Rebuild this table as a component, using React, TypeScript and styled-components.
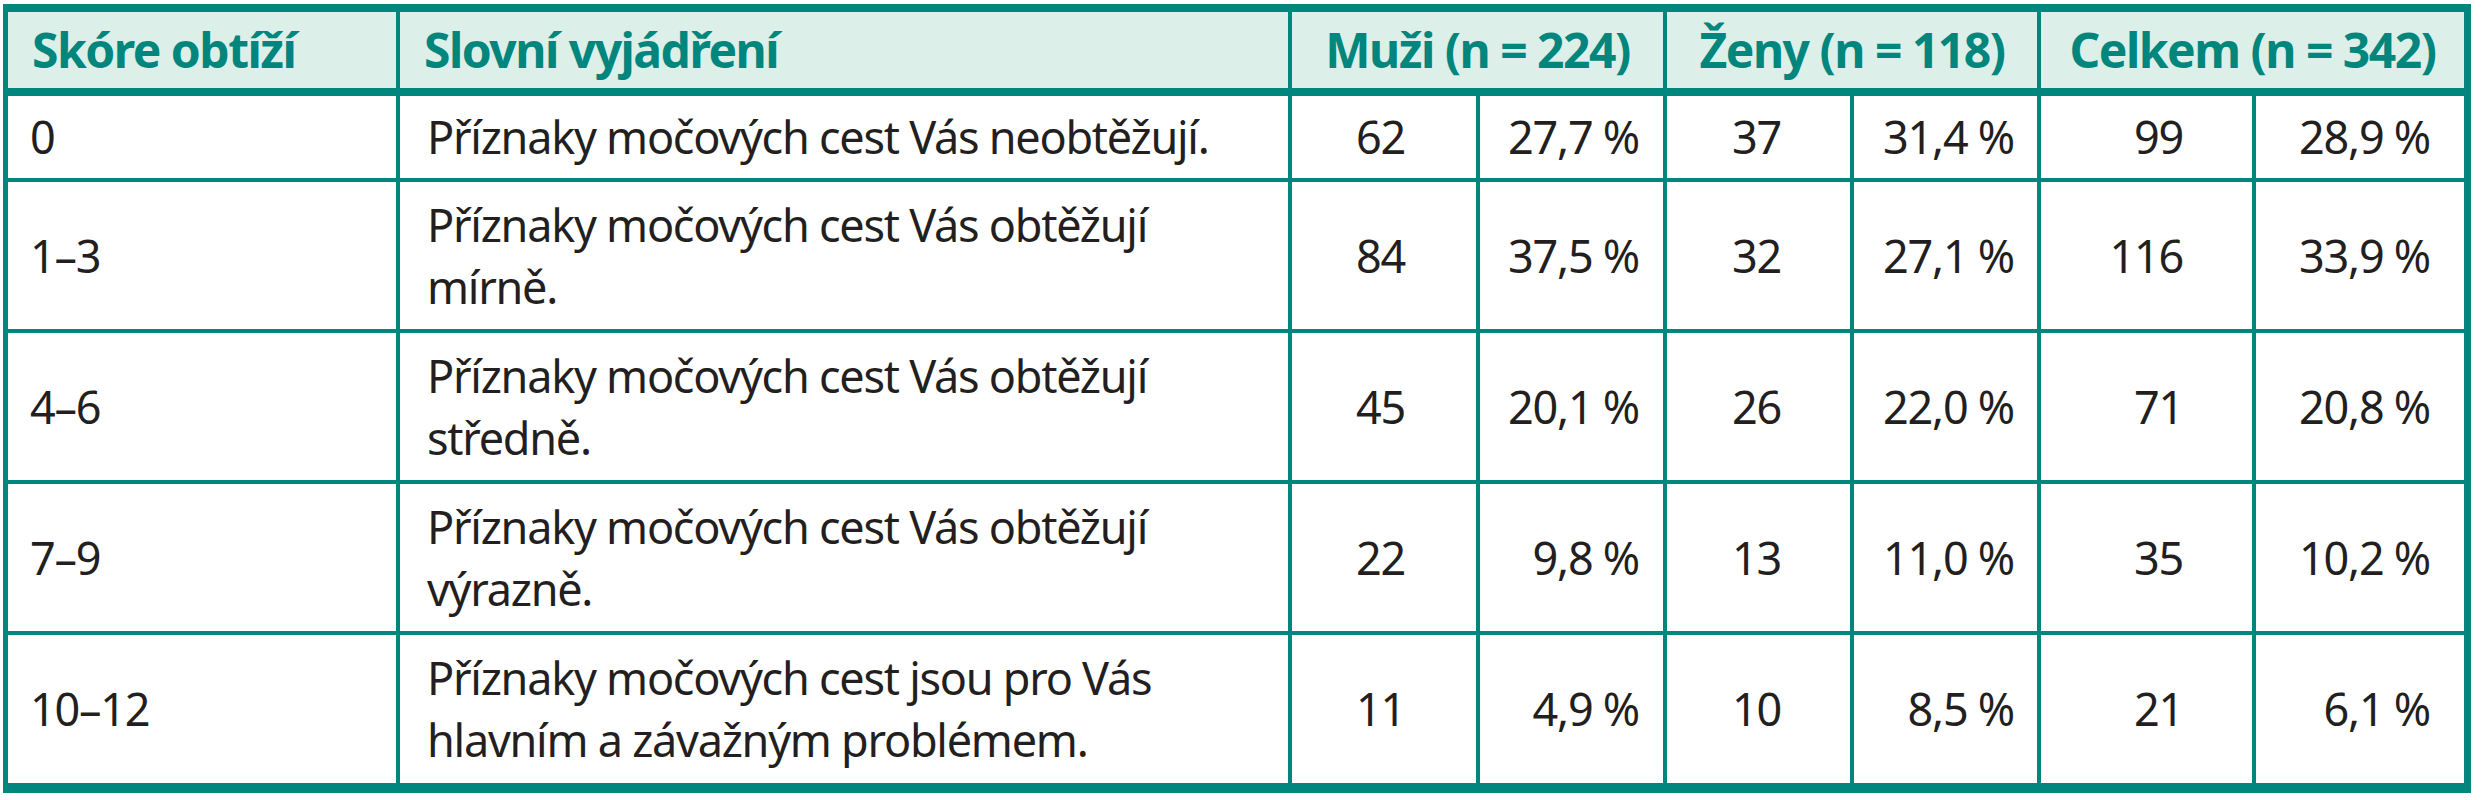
import React from "react";
import styled, { createGlobalStyle } from "styled-components";

const TEAL = "#00867c";
const HEAD_BG = "#dcefe9";
const INK = "#231f20";

const GlobalStyle = createGlobalStyle`
  html, body { margin: 0; padding: 0; background: #ffffff; }
  body { font-family: "Noto Sans", "Open Sans", sans-serif; }
`;

const Table = styled.div`
  display: grid;
  grid-template-columns: 388px 888px 184px 183px 183px 183px 211px 208px;
  grid-template-rows: 80px 82px 147px 147px 147px 148px;
  column-gap: 4px;
  row-gap: 4px;
  width: max-content;
  margin: 4px 0 0 3px;
  padding: 8px 7px 10px 5px;
  background: ${TEAL};
`;

const HeadCell = styled.div<{ $span?: number; $center?: boolean }>`
  grid-column: span ${(p) => p.$span ?? 1};
  margin-bottom: 4px;
  background: ${HEAD_BG};
  color: ${TEAL};
  font-family: "Noto Sans", "Open Sans", sans-serif;
  font-weight: 700;
  font-size: 48px;
  letter-spacing: -1.5px;
  line-height: 1;
  display: flex;
  align-items: center;
  justify-content: ${(p) => (p.$center ? "center" : "flex-start")};
  padding: 0 ${(p) => (p.$center ? 0 : 24)}px;
  white-space: nowrap;
`;

const Cell = styled.div<{ $align?: "left" | "right"; $padL?: number; $padR?: number }>`
  background: #ffffff;
  color: ${INK};
  font-family: "Noto Sans", "Open Sans", sans-serif;
  font-weight: 400;
  font-size: 45px;
  letter-spacing: -1.25px;
  line-height: 62px;
  display: flex;
  flex-direction: column;
  justify-content: center;
  align-items: ${(p) => (p.$align === "right" ? "flex-end" : "flex-start")};
  padding: 0 ${(p) => p.$padR ?? 0}px 0 ${(p) => p.$padL ?? 0}px;
  white-space: nowrap;
`;

type Row = {
  score: string;
  text: string[];
  m: string;
  mp: string;
  z: string;
  zp: string;
  c: string;
  cp: string;
};

const rows: Row[] = [
  { score: "0", text: ["Příznaky močových cest Vás neobtěžují."], m: "62", mp: "27,7 %", z: "37", zp: "31,4 %", c: "99", cp: "28,9 %" },
  { score: "1–3", text: ["Příznaky močových cest Vás obtěžují", "mírně."], m: "84", mp: "37,5 %", z: "32", zp: "27,1 %", c: "116", cp: "33,9 %" },
  { score: "4–6", text: ["Příznaky močových cest Vás obtěžují", "středně."], m: "45", mp: "20,1 %", z: "26", zp: "22,0 %", c: "71", cp: "20,8 %" },
  { score: "7–9", text: ["Příznaky močových cest Vás obtěžují", "výrazně."], m: "22", mp: "9,8 %", z: "13", zp: "11,0 %", c: "35", cp: "10,2 %" },
  { score: "10–12", text: ["Příznaky močových cest jsou pro Vás", "hlavním a závažným problémem."], m: "11", mp: "4,9 %", z: "10", zp: "8,5 %", c: "21", cp: "6,1 %" },
];

export default function App() {
  return (
    <>
      <GlobalStyle />
      <Table>
        <HeadCell>Skóre obtíží</HeadCell>
        <HeadCell>Slovní vyjádření</HeadCell>
        <HeadCell $span={2} $center>Muži (n = 224)</HeadCell>
        <HeadCell $span={2} $center>Ženy (n = 118)</HeadCell>
        <HeadCell $span={2} $center>Celkem (n = 342)</HeadCell>
        {rows.map((r) => (
          <React.Fragment key={r.score}>
            <Cell $padL={22}>{r.score}</Cell>
            <Cell $padL={27}>
              {r.text.map((t) => (
                <span key={t}>{t}</span>
              ))}
            </Cell>
            <Cell $align="right" $padR={71}>{r.m}</Cell>
            <Cell $align="right" $padR={24}>{r.mp}</Cell>
            <Cell $align="right" $padR={69}>{r.z}</Cell>
            <Cell $align="right" $padR={23}>{r.zp}</Cell>
            <Cell $align="right" $padR={69}>{r.c}</Cell>
            <Cell $align="right" $padR={34}>{r.cp}</Cell>
          </React.Fragment>
        ))}
      </Table>
    </>
  );
}
